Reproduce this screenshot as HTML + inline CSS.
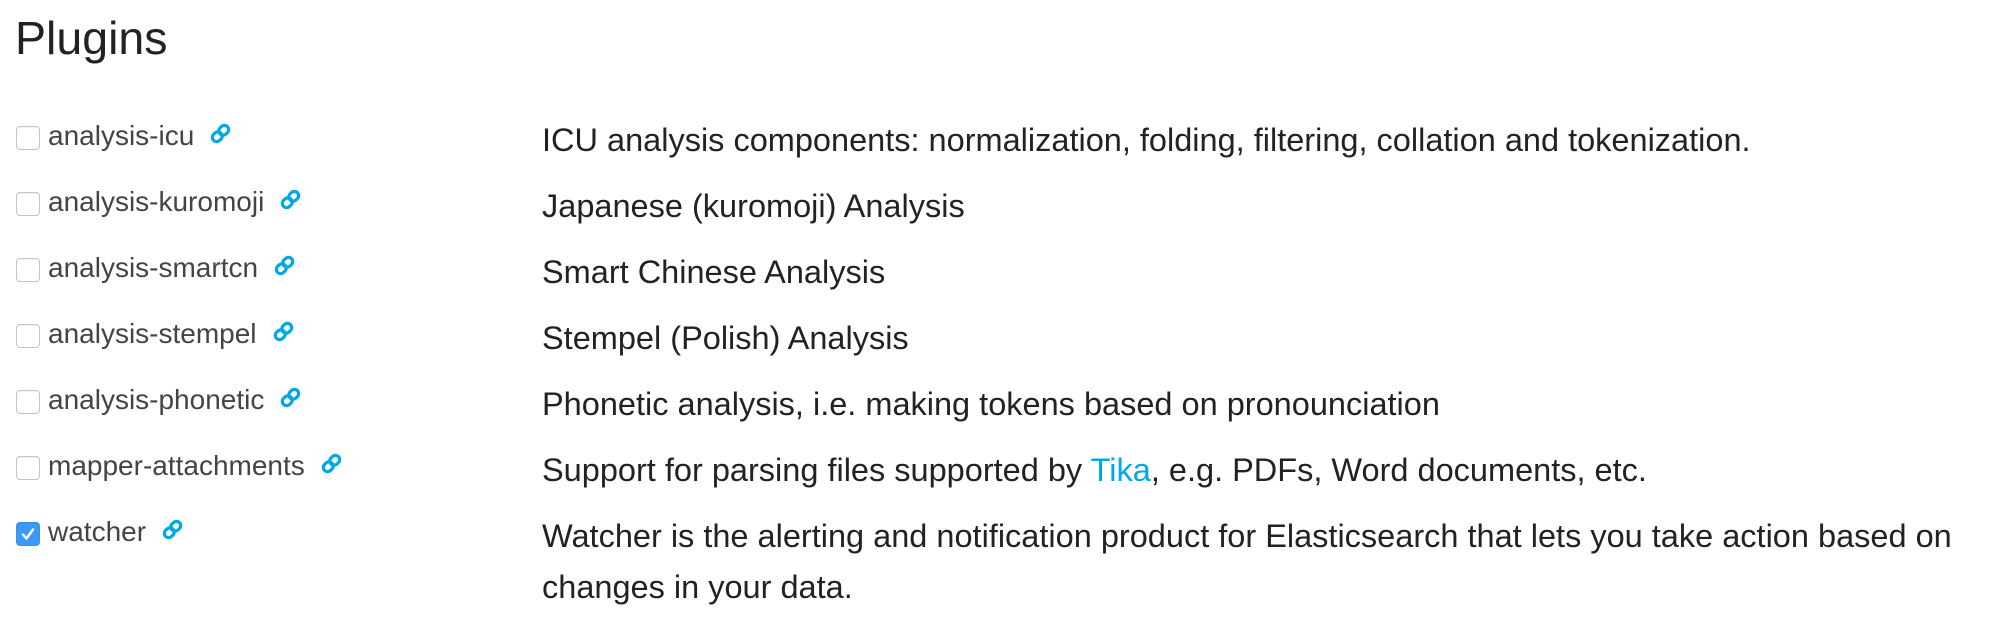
<!DOCTYPE html>
<html><head><meta charset="utf-8"><style>
html,body{margin:0;padding:0;background:#fff;width:1990px;height:624px;overflow:hidden;font-family:"Liberation Sans",Arial,sans-serif}
h1{position:absolute;left:15px;top:11px;margin:0;font-weight:normal;font-size:46.5px;line-height:54px;color:#222}
.cb{position:absolute;left:16px;width:22px;height:22px;border:1px solid #c4c4c4;border-radius:4px;background:#fff;box-shadow:inset 0 1px 1px rgba(0,0,0,.05)}
.cb.on{background:#3b99fc;border-color:#3b8fe8}
.lb{position:absolute;left:48px;font-size:28px;line-height:34px;color:#444;white-space:nowrap}
.lb svg{display:inline-block;vertical-align:middle;margin-left:15px;position:relative;top:-4px}
.ds{position:absolute;left:542px;font-size:32.5px;line-height:51px;color:#222;white-space:nowrap}
a{color:#00a9e5;text-decoration:none}
</style></head><body>
<h1>Plugins</h1>

<div class="cb" style="top:126px"></div>
<div class="lb" style="top:119px">analysis-icu<svg width="23" height="23" viewBox="0 0 20 20"><g transform="rotate(-45 10 10)" fill="none" stroke="#00a9e5" stroke-width="2.8"><rect x="1.5" y="6.3" width="9" height="7.4" rx="3.7"/><rect x="9.5" y="6.3" width="9" height="7.4" rx="3.7"/></g></svg></div>
<div class="ds" style="top:115px">ICU analysis components: normalization, folding, filtering, collation and tokenization.</div>

<div class="cb" style="top:192px"></div>
<div class="lb" style="top:185px">analysis-kuromoji<svg width="23" height="23" viewBox="0 0 20 20"><g transform="rotate(-45 10 10)" fill="none" stroke="#00a9e5" stroke-width="2.8"><rect x="1.5" y="6.3" width="9" height="7.4" rx="3.7"/><rect x="9.5" y="6.3" width="9" height="7.4" rx="3.7"/></g></svg></div>
<div class="ds" style="top:181px">Japanese (kuromoji) Analysis</div>

<div class="cb" style="top:258px"></div>
<div class="lb" style="top:251px">analysis-smartcn<svg width="23" height="23" viewBox="0 0 20 20"><g transform="rotate(-45 10 10)" fill="none" stroke="#00a9e5" stroke-width="2.8"><rect x="1.5" y="6.3" width="9" height="7.4" rx="3.7"/><rect x="9.5" y="6.3" width="9" height="7.4" rx="3.7"/></g></svg></div>
<div class="ds" style="top:247px">Smart Chinese Analysis</div>

<div class="cb" style="top:324px"></div>
<div class="lb" style="top:317px">analysis-stempel<svg width="23" height="23" viewBox="0 0 20 20"><g transform="rotate(-45 10 10)" fill="none" stroke="#00a9e5" stroke-width="2.8"><rect x="1.5" y="6.3" width="9" height="7.4" rx="3.7"/><rect x="9.5" y="6.3" width="9" height="7.4" rx="3.7"/></g></svg></div>
<div class="ds" style="top:313px">Stempel (Polish) Analysis</div>

<div class="cb" style="top:390px"></div>
<div class="lb" style="top:383px">analysis-phonetic<svg width="23" height="23" viewBox="0 0 20 20"><g transform="rotate(-45 10 10)" fill="none" stroke="#00a9e5" stroke-width="2.8"><rect x="1.5" y="6.3" width="9" height="7.4" rx="3.7"/><rect x="9.5" y="6.3" width="9" height="7.4" rx="3.7"/></g></svg></div>
<div class="ds" style="top:379px">Phonetic analysis, i.e. making tokens based on pronounciation</div>

<div class="cb" style="top:456px"></div>
<div class="lb" style="top:449px">mapper-attachments<svg width="23" height="23" viewBox="0 0 20 20"><g transform="rotate(-45 10 10)" fill="none" stroke="#00a9e5" stroke-width="2.8"><rect x="1.5" y="6.3" width="9" height="7.4" rx="3.7"/><rect x="9.5" y="6.3" width="9" height="7.4" rx="3.7"/></g></svg></div>
<div class="ds" style="top:445px">Support for parsing files supported by <a>Tika</a>, e.g. PDFs, Word documents, etc.</div>

<div class="cb on" style="top:522px"><svg width="22" height="22" viewBox="0 0 22 22"><path d="M6 11.5 L9.5 15.5 L16 6.5" fill="none" stroke="#fff" stroke-width="2.4" stroke-linecap="round" stroke-linejoin="round"/></svg></div>
<div class="lb" style="top:515px">watcher<svg width="23" height="23" viewBox="0 0 20 20"><g transform="rotate(-45 10 10)" fill="none" stroke="#00a9e5" stroke-width="2.8"><rect x="1.5" y="6.3" width="9" height="7.4" rx="3.7"/><rect x="9.5" y="6.3" width="9" height="7.4" rx="3.7"/></g></svg></div>
<div class="ds" style="top:511px">Watcher is the alerting and notification product for Elasticsearch that lets you take action based on<br>changes in your data.</div>
</body></html>
